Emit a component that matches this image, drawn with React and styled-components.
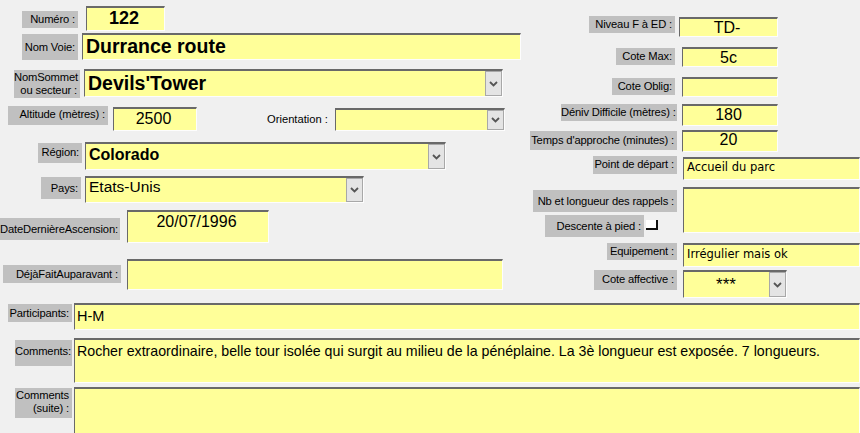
import React from 'react'
import styled, { createGlobalStyle } from 'styled-components'

const Global = createGlobalStyle`
  * { box-sizing: border-box; }
  body {
    margin: 0;
    background: #f0f0f0;
    font-family: "Liberation Sans", Arial, sans-serif;
  }
`

const Page = styled.div`
  width: 860px;
  height: 433px;
  overflow: hidden;
  background: #f0f0f0;
`

const Top = styled.div`
  display: grid;
  grid-template-columns: 520px 340px;
  height: 298px;
`

const Column = styled.div`
  display: flex;
  flex-direction: column;
`

const Row = styled.div`
  display: flex;
  align-items: flex-start;
  margin-top: ${p => p.top || 0}px;
  padding-left: ${p => p.indent || 0}px;
`

const Label = styled.div`
  flex: none;
  width: ${p => p.w}px;
  height: ${p => p.h}px;
  margin-top: ${p => p.dy || 0}px;
  background: #c0c0c0;
  color: #000;
  font-size: 11.2px;
  letter-spacing: -0.15px;
  line-height: 13px;
  text-align: right;
  padding: ${p => p.pt ?? 2}px 3px 0 0;
  white-space: nowrap;
`

const PlainLabel = styled.div`
  flex: none;
  margin-left: ${p => p.gap || 0}px;
  margin-top: ${p => p.dy || 0}px;
  font-size: 11.2px;
  line-height: 13px;
  width: ${p => p.w}px;
  white-space: nowrap;
`

const Field = styled.div`
  position: relative;
  flex: ${p => (p.grow ? '1' : 'none')};
  width: ${p => (p.grow ? 'auto' : `${p.w}px`)};
  height: ${p => p.h}px;
  margin-left: ${p => p.gap || 0}px;
  margin-top: ${p => p.dy || 0}px;
  background: #ffff99;
  border-top: 2px solid #696969;
  border-left: 1px solid #696969;
  border-right: 1px solid #fdfdfd;
  border-bottom: 1px solid #fdfdfd;
  color: #000;
  font-family: ${p => (p.tahoma ? '"DejaVu Sans", "Liberation Sans", sans-serif' : '"Liberation Sans", Arial, sans-serif')};
  font-size: ${p => p.size || 15}px;
  font-weight: ${p => (p.bold ? 700 : 400)};
  text-align: ${p => p.align || 'left'};
  line-height: ${p => p.lh || 18}px;
  padding: ${p => p.pt ?? 0}px ${p => (p.combo ? 18 : 3)}px 0 ${p => (p.align === 'center' ? 0 : p.pl ?? 3)}px;
  white-space: nowrap;
  overflow: hidden;
`

const DropButton = styled.div`
  position: absolute;
  top: 0;
  right: 0;
  bottom: 0;
  width: 17px;
  background: #e4e4e4;
  border: 1px solid #a8a8a8;
  display: flex;
  align-items: center;
  justify-content: center;
`

const LabelStack = styled.div`
  display: flex;
  flex-direction: column;
  align-items: flex-end;
  width: ${p => p.w}px;
`

const CheckRow = styled.div`
  display: flex;
  align-items: flex-start;
  margin-top: 3px;
  padding-right: 19px;
`

const Check = styled.div`
  width: 12px;
  height: 10px;
  margin: 5px 0 0 2px;
  background: #fff;
  border-right: 2px solid #111;
  border-bottom: 2px solid #111;
`

const Bottom = styled.div`
  display: flex;
  flex-direction: column;
`

function Chevron() {
  return (
    <svg width="9" height="6" viewBox="0 0 9 6">
      <path d="M1 1 L4.5 4.5 L8 1" fill="none" stroke="#555" strokeWidth="1.8" />
    </svg>
  )
}

function Combo({ children, ...props }) {
  return (
    <Field combo {...props}>
      {children}
      <DropButton>
        <Chevron />
      </DropButton>
    </Field>
  )
}

export default function App() {
  return (
    <Page>
      <Global />
      <Top>
        <Column>
          <Row top={6} indent={22}>
            <Label w={56} h={17} dy={5}>Numéro :</Label>
            <Field w={79} h={25} gap={8} size={18} bold align="center" lh={21}>122</Field>
          </Row>
          <Row top={2} indent={22}>
            <Label w={56} h={26} dy={1} pt={7}>Nom Voie:</Label>
            <Field w={439} h={27} gap={4} size={19.5} bold lh={23}>Durrance route</Field>
          </Row>
          <Row top={9} indent={14}>
            <Label w={66} h={28} dy={1} pt={1}>NomSommet<br />ou secteur :</Label>
            <Combo w={419} h={28} gap={4} size={19.5} bold lh={24}>Devils'Tower</Combo>
          </Row>
          <Row top={8} indent={8}>
            <Label w={100} h={19} pt={2}>Altitude (mètres) :</Label>
            <Field w={84} h={24} gap={5} dy={1} size={16} align="center" lh={20}>2500</Field>
            <PlainLabel gap={70} dy={7} w={68}>Orientation :</PlainLabel>
            <Combo w={170} h={23} dy={2} />
          </Row>
          <Row top={11} indent={38}>
            <Label w={44} h={20} dy={1} pt={3}>Région:</Label>
            <Combo w={361} h={28} gap={3} size={16} bold lh={21}>Colorado</Combo>
          </Row>
          <Row top={6} indent={41}>
            <Label w={40} h={22} dy={1} pt={5}>Pays:</Label>
            <Combo w={279} h={27} gap={4} size={15.5} lh={17}>Etats-Unis</Combo>
          </Row>
          <Row top={7} indent={0}>
            <Label w={120} h={22} dy={8} pt={5}>DateDernièreAscension:</Label>
            <Field w={142} h={33} gap={7} size={16} align="center" lh={19}>20/07/1996</Field>
          </Row>
          <Row top={16} indent={3}>
            <Label w={118} h={18} dy={6} pt={3}>DéjàFaitAuparavant :</Label>
            <Field w={376} h={31} gap={6} />
          </Row>
        </Column>

        <Column>
          <Row top={16} indent={69}>
            <Label w={86} h={17}>Niveau F à ED :</Label>
            <Field w={99} h={20} gap={4} dy={1} size={16} align="center" lh={17}>TD-</Field>
          </Row>
          <Row top={10} indent={96}>
            <Label w={59} h={17} dy={1}>Cote Max:</Label>
            <Field w={96} h={20} gap={7} size={16} align="center" lh={17}>5c</Field>
          </Row>
          <Row top={10} indent={92}>
            <Label w={63} h={17} dy={1}>Cote Oblig:</Label>
            <Field w={96} h={20} gap={7} />
          </Row>
          <Row top={7} indent={41}>
            <Label w={116} h={17}>Déniv Difficile (mètres) :</Label>
            <Field w={96} h={22} gap={5} size={16} align="center" lh={18}>180</Field>
          </Row>
          <Row top={4} indent={10}>
            <Label w={147} h={19} dy={1} pt={3}>Temps d'approche (minutes) :</Label>
            <Field w={96} h={22} gap={5} size={16} align="center" lh={16}>20</Field>
          </Row>
          <Row top={4} indent={73}>
            <Label w={84} h={18}>Point de départ :</Label>
            <Field w={177} h={23} gap={6} dy={1} tahoma size={11.5} lh={17}>Accueil du parc</Field>
          </Row>
          <Row top={7} indent={0}>
            <LabelStack w={157}>
              <Label w={144} h={22} dy={3} pt={5}>Nb et longueur des rappels :</Label>
              <CheckRow>
                <Label w={99} h={22} pt={5}>Descente à pied :</Label>
                <Check />
              </CheckRow>
            </LabelStack>
            <Field w={177} h={46} gap={6} />
          </Row>
          <Row top={6} indent={87}>
            <Label w={70} h={17}>Equipement :</Label>
            <Field w={177} h={24} gap={6} tahoma size={11.5} lh={19}>Irrégulier mais ok</Field>
          </Row>
          <Row top={3} indent={74}>
            <Label w={83} h={20} pt={3}>Cote affective :</Label>
            <Combo w={104} h={28} gap={6} size={17} align="center" lh={20} pt={3}>***</Combo>
          </Row>
        </Column>
      </Top>

      <Bottom>
        <Row top={5} indent={8}>
          <Label w={64} h={18} dy={1} pt={3}>Participants:</Label>
          <Field grow h={27} gap={2} size={14.5} lh={20} pt={1} pl={2}>H-M</Field>
        </Row>
        <Row top={8} indent={15}>
          <Label w={57} h={26} dy={2} pt={5}>Comments:</Label>
          <Field grow h={45} gap={2} size={14.2} lh={20} pt={1} pl={2}>
            Rocher extraordinaire, belle tour isolée qui surgit au milieu de la pénéplaine. La 3è longueur est exposée. 7 longueurs.
          </Field>
        </Row>
        <Row top={4} indent={15}>
          <Label w={57} h={30} dy={1} pt={1}>Comments<br />(suite) :</Label>
          <Field grow h={50} gap={2} />
        </Row>
      </Bottom>
    </Page>
  )
}
